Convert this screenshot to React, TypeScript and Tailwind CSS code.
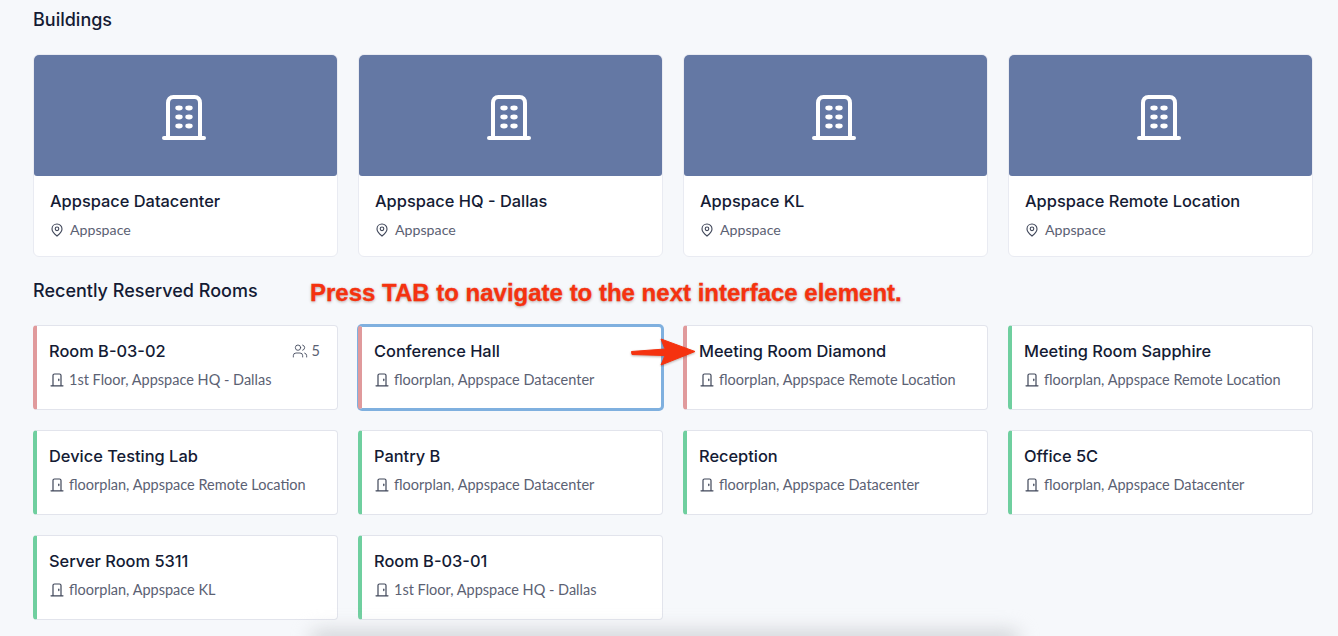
import { Users } from "lucide-react";

const buildings = ["Appspace Datacenter", "Appspace HQ - Dallas", "Appspace KL", "Appspace Remote Location"];

const rooms = [
  { name: "Room B-03-02", place: "1st Floor, Appspace HQ - Dallas", busy: true, seats: 5 },
  { name: "Conference Hall", place: "floorplan, Appspace Datacenter", busy: true, focused: true },
  { name: "Meeting Room Diamond", place: "floorplan, Appspace Remote Location", busy: true },
  { name: "Meeting Room Sapphire", place: "floorplan, Appspace Remote Location" },
  { name: "Device Testing Lab", place: "floorplan, Appspace Remote Location" },
  { name: "Pantry B", place: "floorplan, Appspace Datacenter" },
  { name: "Reception", place: "floorplan, Appspace Datacenter" },
  { name: "Office 5C", place: "floorplan, Appspace Datacenter" },
  { name: "Server Room 5311", place: "floorplan, Appspace KL" },
  { name: "Room B-03-01", place: "1st Floor, Appspace HQ - Dallas" },
];

function BuildingIcon() {
  return (
    <svg width="46" height="46" viewBox="0 0 46 46" fill="none" stroke="#fff" strokeWidth="4" strokeLinecap="round">
      <path d="M7 44V9C7 5.500 9 3 12.500 3H33.500C37 3 39 5.500 39 9V44" />
      <path d="M3 44H43" />
      <g fill="#fff" stroke="none">
        <ellipse cx="18" cy="14" rx="3.700" ry="2.400" />
        <ellipse cx="28" cy="14" rx="3.700" ry="2.400" />
        <ellipse cx="18" cy="23" rx="3.700" ry="2.400" />
        <ellipse cx="28" cy="23" rx="3.700" ry="2.400" />
        <ellipse cx="18" cy="32" rx="3.700" ry="2.400" />
        <ellipse cx="28" cy="32" rx="3.700" ry="2.400" />
      </g>
    </svg>
  );
}

function PinIcon() {
  return (
    <svg width="14" height="14" viewBox="0 0 14 14" fill="none" stroke="#3f4659" strokeWidth="1.100">
      <path d="M7 13C4.600 11 2 8.700 2 5.900C2 3 4.300 1 7 1C9.700 1 12 3 12 5.900C12 8.700 9.400 11 7 13Z" />
      <circle cx="7" cy="5.800" r="1.800" />
    </svg>
  );
}

function DoorIcon() {
  return (
    <svg width="14" height="14" viewBox="0 0 14 14" fill="none" stroke="#3f4659" strokeWidth="1.200" strokeLinecap="round">
      <path d="M3 12.500V2.500C3 1.600 3.600 1 4.500 1H9.500C10.400 1 11 1.600 11 2.500V12.500" />
      <path d="M1 12.800H13" />
      <path d="M8.800 6.200V7.600" />
    </svg>
  );
}

function Annotation() {
  return (
    <>
      <div className="absolute left-[310px] top-[279px] whitespace-nowrap font-['Liberation_Sans',sans-serif] text-[24px] leading-[28px] font-bold text-[#f5320f] [-webkit-text-stroke:0.3px_#f5320f] [text-shadow:0_1px_3px_rgba(90,60,50,0.45)]">
        Press TAB to navigate to the next interface element.
      </div>
      <svg className="absolute left-[629px] top-[337px]" width="68" height="30" viewBox="0 0 68 30">
        <path d="M2.500 14.500L36 12L32 2L66 14.500L32 28L36 18.500L3 17.500Z" fill="#f5320f" stroke="#f5320f" strokeWidth="1" strokeLinejoin="round" style={{ filter: "drop-shadow(0 1px 1px rgba(90,60,50,0.4))" }} />
      </svg>
    </>
  );
}

export default function App() {
  return (
    <div className="relative h-[636px] overflow-hidden bg-[#f6f8fb] pl-[33px] pr-[25px] pt-[9px] font-['Lato',sans-serif]">
      <h2 className="font-['Inter',sans-serif] text-[18px] leading-[22px] font-medium text-[#141b34]">Buildings</h2>

      <div className="mt-[23px] grid grid-cols-4 gap-5">
        {buildings.map((b) => (
          <div key={b} className="h-[203px] rounded-md border border-[#e9ebf2] bg-white">
            <div className="flex h-[121px] items-center justify-center rounded-t-[5px] rounded-b-[3px] bg-[#6478a4] pr-[3px] pt-[3px]">
              <BuildingIcon />
            </div>
            <div className="px-[16px] pt-[15px]">
              <div className="font-['Inter',sans-serif] text-[16.400px] leading-[20px] font-medium text-[#141b34]">{b}</div>
              <div className="mt-[9px] flex items-center gap-[6px] text-[14.200px] leading-[20px] text-[#5b6173]">
                <PinIcon />
                Appspace
              </div>
            </div>
          </div>
        ))}
      </div>

      <h2 className="mt-[23px] font-['Inter',sans-serif] text-[18px] leading-[22px] font-medium text-[#141b34]">Recently Reserved Rooms</h2>

      <div className="mt-[23px] grid grid-cols-4 gap-5">
        {rooms.map((r) => (
          <div
            key={r.name}
            className={`h-[85px] rounded-[4px] border-l-4 bg-white pl-[12px] pr-[17px] ${r.busy ? "border-l-[#e09a9c]" : "border-l-[#6fcf9f]"} ${r.focused ? "border-y-2 border-r-2 border-y-[#7fb0df] border-r-[#7fb0df] pt-[14px] shadow-[0_0_0_1px_#7fb0df]" : "border-y border-r border-y-[#e2e4ec] border-r-[#e2e4ec] pt-[15px]"}`}
          >
            <div className="flex items-center justify-between">
              <span className="font-['Inter',sans-serif] text-[16.400px] leading-[20px] font-medium text-[#141b34]">{r.name}</span>
              {r.seats && (
                <span className="flex items-center gap-[4px] text-[14.500px] leading-[20px] text-[#5b6173]">
                  <Users size={16} strokeWidth={1.300} color="#3f4659" />
                  {r.seats}
                </span>
              )}
            </div>
            <div className="mt-[9px] flex items-center gap-[5px] pl-[1px] text-[14.500px] leading-[20px] text-[#5b6173]">
              <DoorIcon />
              {r.place}
            </div>
          </div>
        ))}
      </div>

      <Annotation />
      <div className="absolute left-[310px] top-[630px] h-[20px] w-[710px] rounded-full bg-[#d3d5d9] blur-[9px]" />
    </div>
  );
}
